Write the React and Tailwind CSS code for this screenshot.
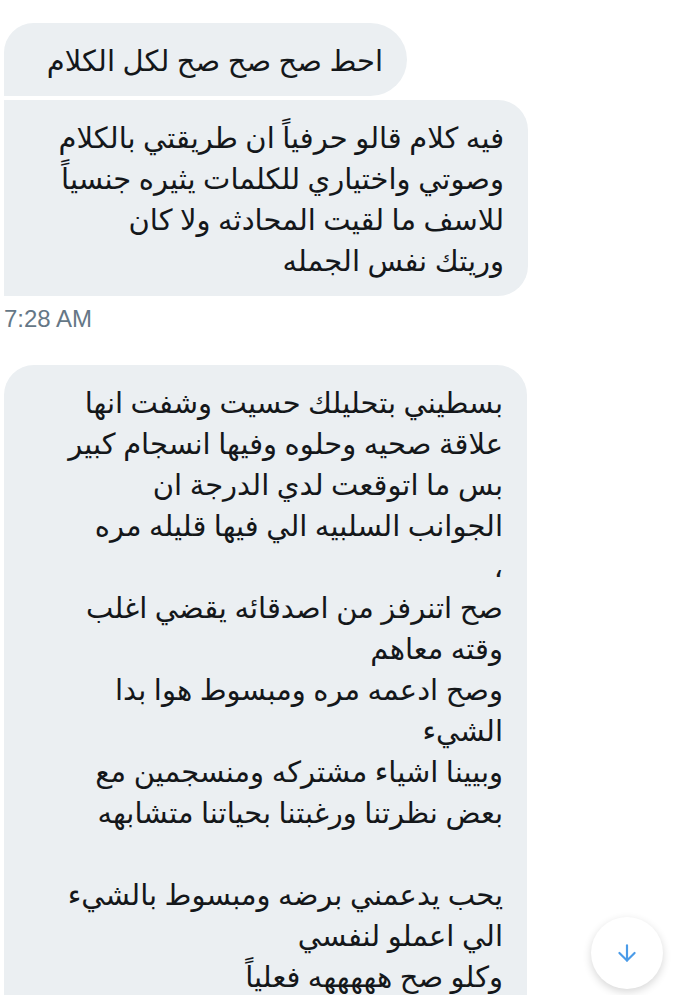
import React from 'react';
import { ArrowDown } from 'lucide-react';

const first = ['احط صح صح صح لكل الكلام'];

const second = [
  'فيه كلام قالو حرفياً ان طريقتي بالكلام',
  'وصوتي واختياري للكلمات يثيره جنسياً',
  'للاسف ما لقيت المحادثه ولا كان',
  'وريتك نفس الجمله',
];

const third = [
  'بسطيني بتحليلك حسيت وشفت انها',
  'علاقة صحيه وحلوه وفيها انسجام كبير',
  'بس ما اتوقعت لدي الدرجة ان',
  'الجوانب السلبيه الي فيها قليله مره',
  '،',
  'صح اتنرفز من اصدقائه يقضي اغلب',
  'وقته معاهم',
  'وصح ادعمه مره ومبسوط هوا بدا',
  'الشيء',
  'وبيينا اشياء مشتركه ومنسجمين مع',
  'بعض نظرتنا ورغبتنا بحياتنا متشابهه',
  '',
  'يحب يدعمني برضه ومبسوط بالشيء',
  'الي اعملو لنفسي',
  'وكلو صح هههههه فعلياً',
];

function Bubble({ lines, className }) {
  return (
    <div
      dir="rtl"
      className={`bg-[#ebeff2] text-[#14171a] text-[29px] leading-[41px] pl-5 pr-6 py-4 ${className}`}
    >
      {lines.map((line, i) => (
        <div key={i} className="whitespace-nowrap text-right h-[41px]">
          {line}
        </div>
      ))}
    </div>
  );
}

export default function App() {
  return (
    <div className="relative h-[995px] w-[699px] overflow-hidden bg-white font-['Noto_Sans','DejaVu_Sans',sans-serif]">
      <div className="flex flex-col items-start pl-1 pt-[23px]">
        <Bubble lines={first} className="w-[403px] rounded-tl-[30px] rounded-r-[37px]" />
        <Bubble lines={second} className="w-[524px] mt-1 rounded-r-[30px]" />

        <div className="mt-[9px] text-[24px] leading-[28px] text-[#657786] font-['Liberation_Sans',sans-serif]">
          7:28 AM
        </div>

        <Bubble lines={third} className="w-[523px] mt-[32px] rounded-t-[30px]" />
      </div>

      {/* scroll to bottom */}
      <button className="absolute left-[591px] top-[917px] w-[72px] h-[72px] rounded-full bg-white flex items-center justify-center shadow-[0_3px_8px_rgba(0,0,0,0.16)]">
        <ArrowDown className="w-[26px] h-[26px] text-[#4a9be8]" strokeWidth={2} />
      </button>
    </div>
  );
}
